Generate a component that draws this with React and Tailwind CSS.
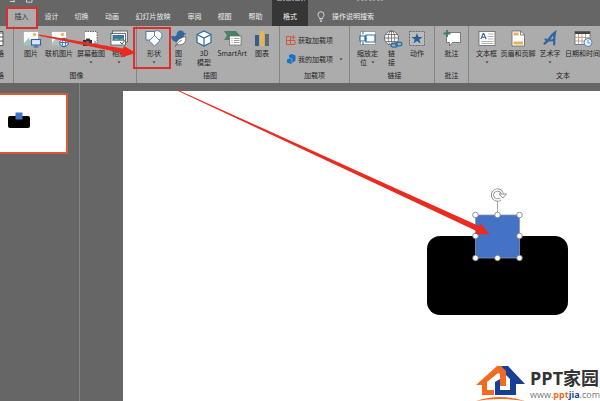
import React from "react";

function Caret() {
  return (
    <svg width="4" height="3" viewBox="0 0 4 3" className="shrink-0" aria-hidden="true">
      <path d="M0.5 0.5h3L2 2.3z" fill="#333" />
    </svg>
  );
}

function Icon({ children, w = 18 }) {
  return (
    <svg width={w} height="17" viewBox={`0 0 ${w} 17`} className="shrink-0 overflow-visible" aria-hidden="true">
      {children}
    </svg>
  );
}

const Picture = () => (
  <Icon>
    <rect x="1.5" y="1.5" width="15" height="14" fill="#fff" stroke="#999" strokeWidth=".6" />
    <circle cx="12.5" cy="4.5" r="1.7" fill="#e8b465" />
    <path d="M2 13l4.500-5 5 5v2H2z" fill="#a8c4ba" />
    <rect x="9.500" y="9.500" width="9" height="5.500" fill="#d5e6f7" stroke="#2f62a0" strokeWidth="1.100" />
    <path d="M14 15v2M11.500 17h5" stroke="#2f62a0" />
  </Icon>
);
const Online = () => (
  <Icon>
    <rect x="1.500" y="1.500" width="15" height="14" fill="#fff" stroke="#999" strokeWidth=".6" />
    <circle cx="12.500" cy="4.500" r="1.700" fill="#e8b465" />
    <path d="M2 13l4.500-5 5 5v2H2z" fill="#a8c4ba" />
    <circle cx="14" cy="12.500" r="4.300" fill="#e6eef7" stroke="#2f62a0" />
    <ellipse cx="14" cy="12.500" rx="1.800" ry="4.300" fill="none" stroke="#2f62a0" strokeWidth=".8" />
    <path d="M10 12.500h8" stroke="#2f62a0" strokeWidth=".8" />
  </Icon>
);
const Screenshot = () => (
  <Icon>
    <rect x="3" y="1.500" width="12" height="13" fill="#fff" />
    <path d="M3 1.500h12v13" fill="none" stroke="#666" strokeDasharray="1.500 1" />
    <path d="M1 10h2.500l1-1.500h3L8.500 10H10v6H1z" fill="#333" />
    <circle cx="5.500" cy="12.700" r="1.700" fill="#777" />
    <path d="M13 11v6M10.500 14h5" stroke="#3c76ad" />
  </Icon>
);
const Album = () => (
  <Icon>
    <rect x="2.500" y="1" width="15" height="11" fill="#e9eef0" stroke="#555" strokeWidth=".8" />
    <rect x="1" y="3.500" width="14.500" height="11.500" fill="#fff" stroke="#555" strokeWidth=".8" />
    <rect x="2.500" y="5" width="11.500" height="6" fill="#3c76a5" />
    <path d="M2.500 11l4-3 3 2 3-2 1.500 3z" fill="#79a28f" />
    <path d="M10 12l2 2 4-5" stroke="#555" fill="none" />
  </Icon>
);
const Shapes = () => (
  <Icon>
    <circle cx="12.200" cy="5.500" r="4.800" fill="#fff" stroke="#36679c" strokeWidth=".8" />
    <rect x="1" y="1.500" width="8.500" height="8.500" fill="#fff" stroke="#36679c" strokeWidth=".8" />
    <path d="M9.500 5.500l5.300 5.300-5.300 5.300-5.300-5.300z" fill="#fff" stroke="#36679c" strokeWidth=".8" />
  </Icon>
);
const Bird = () => (
  <Icon>
    <path d="M1 6c2 .6 4 .4 5.500-.5C6.300 2.500 8 .5 10.500.5c2 0 3 1 3.300 2.200l2.500 1-2.300 1.200C13.500 9 11 12 7 12c-3.500 0-5.500-2.300-6-6z" fill="#2f67a0" />
    <path d="M6 16c0-5 3-8 9.500-9.500C17 12 13 16 7 14.500" fill="#fff" stroke="#555" strokeWidth=".7" />
    <path d="M5 17c2-3.500 4-5.500 7-7" stroke="#555" strokeWidth=".7" fill="none" />
  </Icon>
);
const Cube = () => (
  <Icon>
    <path d="M9 1l7 3.500v8L9 16l-7-3.500v-8z" fill="#fff" stroke="#246c9e" strokeWidth="1.200" />
    <path d="M2 4.500L9 8l7-3.500M9 8v8" fill="none" stroke="#246c9e" strokeWidth="1.200" />
  </Icon>
);
const Smart = () => (
  <Icon>
    <path d="M1 1h12l4 4.500-4 4.500H1l3-4.500z" fill="#4b8068" />
    <rect x="6.500" y="6" width="11.500" height="9" fill="#fff" stroke="#666" strokeWidth=".7" />
    <path d="M8.500 8.500h1M8.500 10.500h1M8.500 12.500h1M11 8.500h5.500M11 10.500h5.500M11 12.500h5.500" stroke="#777" strokeWidth=".7" />
  </Icon>
);
const Chart = () => (
  <Icon>
    <path d="M2 5h4v11H2z" fill="#365d8c" />
    <path d="M7 1h4v15H7z" fill="#e4b451" />
    <path d="M12 4h4v12h-4z" fill="#60686c" />
  </Icon>
);
const Zoom = () => (
  <Icon>
    <path d="M1.500 1.500h15v13h-15z" fill="#fff" stroke="#777" strokeWidth=".6" />
    <path d="M1 6h5v5H1zM7 5h9v7H7z" fill="#fff" stroke="#2b71a8" strokeWidth="1.200" />
    <path d="M6 8.500h2M4 1.500v3M4 12v3" stroke="#2b71a8" />
  </Icon>
);
const Link = () => (
  <Icon>
    <circle cx="8.500" cy="8" r="7" fill="#fff" stroke="#555" strokeWidth=".8" />
    <path d="M1.500 8h14M2.700 4.500h11.600M2.700 11.500h11.600M8.500 1v14" stroke="#555" strokeWidth=".7" />
    <ellipse cx="8.500" cy="8" rx="3.300" ry="7" fill="none" stroke="#555" strokeWidth=".7" />
    <path d="M8 12h11v5.500H8z" fill="#acacac" />
    <rect x="8" y="13.500" width="6.500" height="3.600" rx="1.800" fill="none" stroke="#286eaa" strokeWidth="1.300" />
    <rect x="12.500" y="12.300" width="6.500" height="3.600" rx="1.800" fill="none" stroke="#286eaa" strokeWidth="1.300" />
  </Icon>
);
const Action = () => (
  <Icon>
    <rect x="1.500" y="1.500" width="15" height="14" fill="#bcbcbc" stroke="#555" strokeWidth=".8" strokeDasharray="2 1" />
    <path d="M9 3l1.500 4h4.200l-3.400 2.500 1.300 4L9 11l-3.600 2.500 1.300-4L3.300 7h4.200z" fill="#285f9b" />
  </Icon>
);
const Comment = () => (
  <Icon>
    <path d="M3.500 2.500h14v10H9.500l-3 3.500v-3.500h-3z" fill="#fff" stroke="#555" strokeWidth=".7" />
    <path d="M4 0v7M.5 3.500h7" stroke="#3c7d61" strokeWidth="1.800" />
  </Icon>
);
const TextBox = () => (
  <Icon>
    <rect x="1" y="1.500" width="16" height="14" fill="#fff" stroke="#666" strokeWidth=".8" />
    <path d="M3 9l2.200-5.500h.6L8 9M4 7.200h3" stroke="#2b65a0" fill="none" strokeWidth="1.100" />
    <path d="M10 4h5.500M10 6.500h5.500M10 9h5.500M3 11.500h12.500M3 13.500h12.500" stroke="#999" strokeWidth=".7" />
  </Icon>
);
const Footer = () => (
  <Icon>
    <path d="M3 1h8.500l4 4v11H3z" fill="#fff" stroke="#666" strokeWidth=".8" />
    <path d="M11.500 1v4h4" fill="none" stroke="#666" strokeWidth=".8" />
    <path d="M4.500 2.500h5v3h-5zM4.500 11.500h9.500v3H4.500z" fill="#e4b359" />
  </Icon>
);
const Art = () => (
  <Icon>
    <path d="M3.500 13.500C7 12 9 6 14 2.500c-1 4-1 8-.8 12M4.500 9.500c3 1.500 6 1.200 9 0" fill="none" stroke="#2f65a0" strokeWidth="2.200" strokeLinecap="round" />
  </Icon>
);
const DateIcon = () => (
  <Icon>
    <rect x="1" y="1.500" width="15" height="13" fill="#fff" stroke="#666" strokeWidth=".8" />
    <path d="M1 1.500h15v2.500H1z" fill="#444" />
    <path d="M4.500 4v10M8 4v10M11.500 4v10M1 7.500h15M1 11h15" stroke="#c08a72" strokeWidth=".8" />
    <circle cx="14" cy="12.500" r="4" fill="#e4f0fa" stroke="#4c82b5" />
    <path d="M14 10v3h2.500" fill="none" stroke="#4c82b5" strokeWidth=".8" />
  </Icon>
);

const groups = [
  {
    name: "图像",
    cls: "w-[123px] pl-[3px]",
    items: [
      { icon: Picture, lines: ["图片"], w: "w-[28px]" },
      { icon: Online, lines: ["联机图片"], w: "w-[28px]" },
      { icon: Screenshot, lines: ["屏幕截图"], w: "w-[36px]", menu: true },
      { icon: Album, lines: ["相册"], w: "w-[20px]", menu: true },
    ],
  },
  {
    name: "插图",
    cls: "w-[143px] pl-[4px]",
    items: [
      { icon: Shapes, lines: ["形状"], w: "w-[26px]", menu: true, marked: true },
      { icon: Bird, lines: ["图", "标"], w: "w-[23px]" },
      { icon: Cube, lines: ["3D", "模型"], w: "w-[28px]" },
      { icon: Smart, lines: ["SmartArt"], w: "w-[28px]" },
      { icon: Chart, lines: ["图表"], w: "w-[32px]" },
    ],
  },
  { name: "加载项", cls: "w-[70px]", addins: true },
  {
    name: "链接",
    cls: "w-[85px] pl-[5px]",
    items: [
      { icon: Zoom, lines: ["缩放定", "位"], w: "w-[25px]", menu: true },
      { icon: Link, lines: ["链", "接"], w: "w-[23px]" },
      { icon: Action, lines: ["动作"], w: "w-[28px]" },
    ],
  },
  { name: "批注", cls: "w-[34px]", items: [{ icon: Comment, lines: ["批注"], w: "w-[33px]" }] },
  {
    name: "文本",
    cls: "w-[186px] pl-[3px]",
    items: [
      { icon: TextBox, lines: ["文本框"], w: "w-[29px]", menu: true },
      { icon: Footer, lines: ["页眉和页脚"], w: "w-[34px]" },
      { icon: Art, lines: ["艺术字"], w: "w-[30px]", menu: true },
      { icon: DateIcon, lines: ["日期和时间"], w: "w-[35px]" },
    ],
  },
];

function Tool({ item }) {
  const Glyph = item.icon;
  return (
    <button className={`relative flex h-full shrink-0 flex-col items-center whitespace-nowrap leading-[9px] ${item.w}`}>
      <Glyph />
      <span className="mt-[2px]">{item.lines[0]}</span>
      {(item.lines[1] || item.menu) && (
        <span className="flex h-[9px] items-center gap-1">
          {item.lines[1]}
          {item.menu && <Caret />}
        </span>
      )}
      {item.marked && <span className="absolute -top-[3px] -left-[8px] h-[42px] w-[38px] border-2 border-[#d9302a]" />}
    </button>
  );
}

function AddIns() {
  return (
    <div className="flex flex-col gap-[9px] pt-[5px] pl-[6px] leading-[9px]">
      <button className="flex items-center gap-[2px] whitespace-nowrap">
        <svg width="10" height="10" viewBox="0 0 10 10" aria-hidden="true">
          <path d="M.5 1.500h4v8h-4zM.5 5.500h8.500v4H.5zM7.200 0v4.500M5 2.200h4.500" fill="none" stroke="#d4583a" />
        </svg>
        获取加载项
      </button>
      <button className="flex items-center gap-[2px] whitespace-nowrap">
        <svg width="10" height="10" viewBox="0 0 10 10" aria-hidden="true">
          <path d="M3 1l3-1 3.500 1.500v5L7 8.500 5 10 1 8.500V5l2-1z" fill="#1c72bd" />
          <path d="M1 5l3-1 2 1v4.500" fill="none" stroke="#9bc7e9" strokeWidth=".6" />
        </svg>
        我的加载项
        <span className="pl-[4px]"><Caret /></span>
      </button>
    </div>
  );
}

function Ribbon() {
  return (
    <section className="flex h-[57px] shrink-0 overflow-hidden bg-[#acacac] text-[7px] text-[#252525]" aria-label="插入">
      <div className="flex w-[14px] shrink-0 flex-col items-end overflow-hidden border-r border-[#858585] pt-[4px] pr-[9px] leading-[9px]">
        <Icon>
          <path d="M1 1.500h16v14H1z" fill="#fff" stroke="#555" />
          <path d="M1 3h16M1 7h16M1 11h16M6 3v12M12 3v12" stroke="#555" />
        </Icon>
        <span className="mt-[2px] whitespace-nowrap">表格</span>
        <span className="mt-[13px] whitespace-nowrap">表格</span>
      </div>
      {groups.map((g) => (
        <div key={g.name} className={`flex shrink-0 flex-col border-r border-[#858585] pt-[4px] ${g.cls}`}>
          <div className="flex h-[41px]">
            {g.addins ? <AddIns /> : g.items.map((it) => <Tool key={it.lines[0]} item={it} />)}
          </div>
          <div className="text-center leading-[9px]">{g.name}</div>
        </div>
      ))}
    </section>
  );
}

function Tabs() {
  const tab = "flex h-full shrink-0 items-center justify-center whitespace-nowrap pt-[7px]";
  return (
    <nav className="relative flex h-[26px] shrink-0 overflow-visible bg-[#666] text-[7px] text-[#eee]">
      <button className="relative ml-[6px] flex w-[31px] shrink-0 items-center justify-center bg-[linear-gradient(#666_8px,#acacac_8px)] pt-[7px] text-[#333]">
        插入
        <span className="absolute top-[7px] left-0 z-10 h-[22px] w-[32px] border-2 border-[#d9302a]" />
      </button>
      <button className={`${tab} w-[29px]`}>设计</button>
      <button className={`${tab} w-[31px]`}>切换</button>
      <button className={`${tab} w-[30px]`}>动画</button>
      <button className={`${tab} w-[52px]`}>幻灯片放映</button>
      <button className={`${tab} w-[31px]`}>审阅</button>
      <button className={`${tab} w-[29px]`}>视图</button>
      <button className={`${tab} w-[33px]`}>帮助</button>
      <button className={`${tab} w-[36px] bg-[#363636]`}>格式</button>
      <button className={`${tab} ml-[9px] gap-[7px]`}>
        <svg width="8" height="11" viewBox="0 0 8 11" aria-hidden="true">
          <path d="M2.500 7.500C2.500 6 1 5.500 1 3.700a3 3 0 016 0C7 5.500 5.500 6 5.500 7.500zM2.700 9h2.600M3 10.300h2" fill="none" stroke="#eee" strokeWidth=".8" />
        </svg>
        操作说明搜索
      </button>
      <svg className="absolute top-0 left-0" width="400" height="3" viewBox="0 0 400 3" aria-hidden="true">
        <path d="M10 1.500h5M14 0v2M26.500 0v2.200h5.500V0" fill="none" stroke="#ddd" strokeWidth=".9" />
        <path d="M277 .5h28" stroke="#8a8a8a" strokeDasharray="5 1 2 1" />
        <path d="M357 .5h28" stroke="#999" strokeDasharray="2 2 3 1" />
      </svg>
    </nav>
  );
}

function Slide() {
  return (
    <svg viewBox="0 0 477 310" className="h-[310px] w-[477px]" role="img" aria-label="幻灯片">
      <rect x="304" y="145" width="141" height="79" rx="13" fill="#000" />
      <rect x="352.500" y="124" width="44" height="43" fill="#4472c4" stroke="#8495b5" strokeWidth=".8" />
      <path d="M374.500 109v14" stroke="#999" strokeWidth=".8" />
      <path d="M379.500 104a5 5 0 10-2 4" fill="none" stroke="#777" strokeWidth="3" />
      <path d="M379.500 104a5 5 0 10-2 4" fill="none" stroke="#fff" strokeWidth="1.600" />
      <path d="M376 103h7.500l-3.700 4z" fill="#fff" stroke="#777" strokeWidth=".8" />
      {[[352.5, 124], [374.5, 124], [396.5, 124], [352.5, 145], [396.5, 145], [352.5, 167], [374.5, 167], [396.5, 167]].map(([x, y]) => (
        <circle key={`${x}-${y}`} cx={x} cy={y} r="2.800" fill="#fff" stroke="#777" strokeWidth=".8" />
      ))}
    </svg>
  );
}

function Brand() {
  return (
    <a href="#home" className="absolute right-0 bottom-0 flex items-end gap-[5px] whitespace-nowrap">
      <svg width="49" height="36" viewBox="0 0 49 36" aria-hidden="true">
        <path d="M25 1h7l17 18h-9v11H19V17l5-3v11h10V14L29 9z" fill="#173f95" />
        <path d="M0 20L21 1h4l5 5v15h-6V9l-2-1-11 9v8h7v5H6V20z" fill="#f36a21" />
        <path d="M0 36q24-8 49 0-25-4-49 0z" fill="#f36a21" />
      </svg>
      <span className="flex flex-col font-['Open_Sans','Noto_Sans_CJK_SC',sans-serif]">
        <span className="text-[18px] leading-[22px] font-bold text-[#333]">PPT家园</span>
        <span className="text-[9px] leading-[12px] text-[#777]">
          www.<b className="text-[#f36a21]">ppt</b><b className="text-[#173f95]">jia</b>.com
        </span>
      </span>
    </a>
  );
}

export default function App() {
  return (
    <div className="relative flex h-screen flex-col overflow-hidden bg-[#666] font-['Noto_Sans_CJK_SC',sans-serif]">
      <Tabs />
      <Ribbon />
      <main className="flex min-h-0 flex-1">
        <aside className="w-[80px] shrink-0 border-r border-[#858585] pt-[10px]">
          <button className="block h-[61px] w-[68px] border-2 border-l-0 border-[#d85a38] bg-white" aria-label="幻灯片 1">
            <svg width="66" height="57" viewBox="0 0 66 57" aria-hidden="true">
              <rect x="8" y="21" width="22" height="12" rx="2" fill="#000" />
              <rect x="15.500" y="17.500" width="7" height="7" fill="#4472c4" />
            </svg>
          </button>
        </aside>
        <div className="ml-[43px] mt-[8px] min-w-0 flex-1 overflow-hidden bg-white">
          <Slide />
        </div>
      </main>
      <svg className="pointer-events-none absolute top-0 left-0" width="600" height="401" viewBox="0 0 600 401" aria-hidden="true">
        <path d="M39 34.500L123 48.500 124 46 136 53 121 57.500 122 53 39 35.700z" fill="#ea2b20" />
        <path d="M177 89.500L479 226 481 223.500 489.500 234.500 475 234 476.500 231 177 90.500z" fill="#ea2b20" />
      </svg>
      <Brand />
    </div>
  );
}
